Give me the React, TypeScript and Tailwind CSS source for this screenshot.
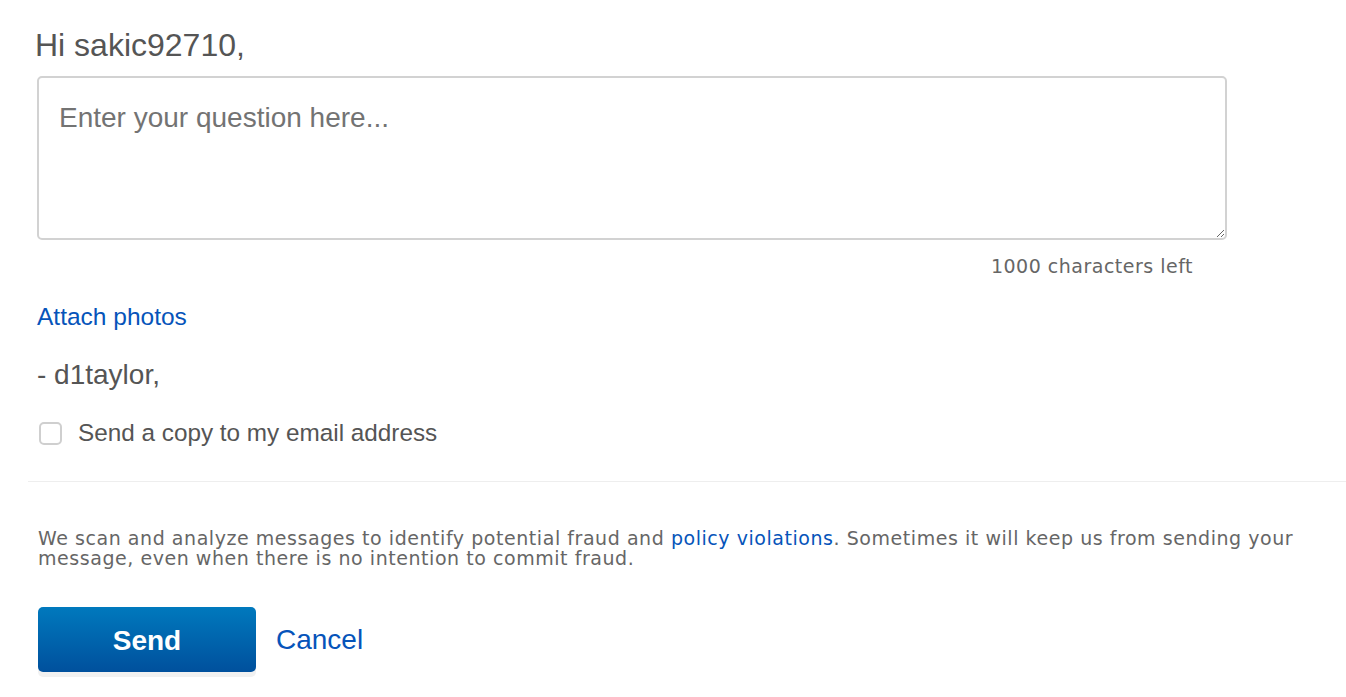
import React from "react";

export default function App() {
  const helv = { fontFamily: '"Liberation Sans", Arial, Helvetica, sans-serif' };
  const verd = { fontFamily: '"DejaVu Sans", Verdana, sans-serif' };
  return (
    <div className="min-h-[697px] w-[1346px] bg-white pl-[28px] pt-[25px]" style={helv}>
      <div className="pl-[9px] w-[1199px]">
        <h1 className="-ml-[2px] text-[32px] leading-[40px] text-[#555] font-normal">Hi sakic92710,</h1>
        <textarea
          className="mt-[11px] block h-[164px] w-[1190px] rounded-[5px] border-2 border-[#d2d2d2] px-[20px] pt-[23px] text-[28px] leading-[34px] text-[#333] placeholder:text-[#737373] outline-none"
          placeholder="Enter your question here..."
          style={helv}
        />
        <div className="mt-[16px] w-[1190px] pr-[34px] text-right text-[19px] leading-[20px] tracking-[0.5px] text-[#666]" style={verd}>
          1000 characters left
        </div>
        <div className="mt-[26px] text-[24.5px] leading-[30px] text-[#0654ba]">
          <a href="#">Attach photos</a>
        </div>
        <div className="mt-[25px] text-[28px] leading-[36px] text-[#555]">- d1taylor,</div>
        <label className="mt-[25px] flex h-[30px] items-center">
          <span className="ml-[2px] h-[23px] w-[23px] rounded-[5px] border-2 border-[#cfcfcf] bg-white" />
          <span className="ml-[16px] text-[24.3px] text-[#555]">Send a copy to my email address</span>
        </label>
      </div>
      <div className="mt-[33px] h-px bg-[#eeeeee]" />
      <div className="pl-[10px] pr-[30px]">
        <p className="mt-[46px] text-[19px] leading-[20px] tracking-[0.55px] text-[#666]" style={verd}>
          We scan and analyze messages to identify potential fraud and{" "}
          <a href="#" className="text-[#0654ba]">policy violations</a>. Sometimes it will keep us from sending your message, even when there is no intention to commit fraud.
        </p>
        <div className="mt-[39px] flex items-center">
          <button
            className="h-[65px] w-[218px] pt-[3px] rounded-[5px] bg-gradient-to-b from-[#0079bd] to-[#00509d] text-[28px] font-bold text-white shadow-[0_5px_0_#f1f1f1]"
            style={helv}
          >
            Send
          </button>
          <a href="#" className="ml-[20px] text-[28px] text-[#0654ba]">Cancel</a>
        </div>
      </div>
    </div>
  );
}
